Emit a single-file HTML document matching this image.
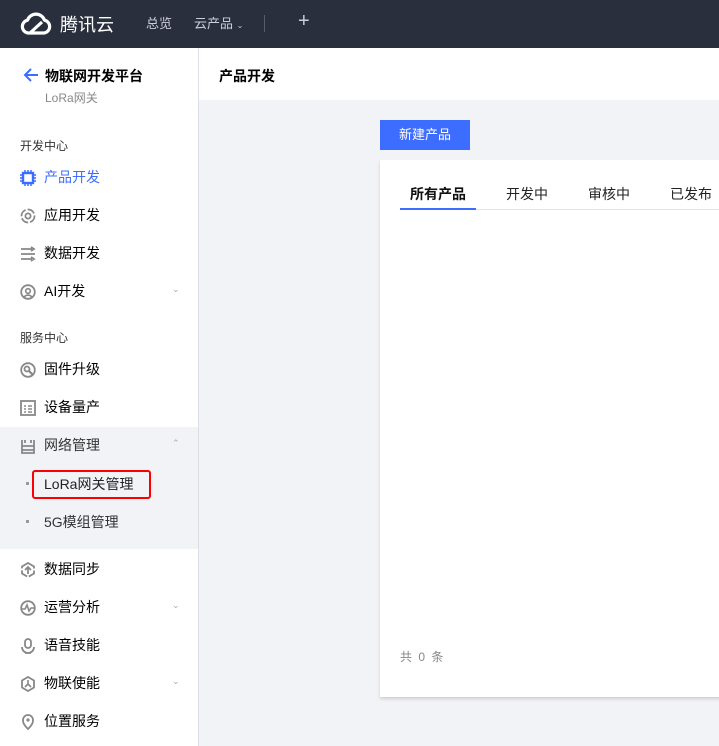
<!DOCTYPE html>
<html><head><meta charset="utf-8"><style>
*{margin:0;padding:0;box-sizing:border-box}
body{width:719px;height:746px;overflow:hidden;background:#f2f3f7;font-family:"Liberation Sans","Noto Sans CJK SC",sans-serif;position:relative;color:#000}
.top{position:absolute;left:0;top:0;width:719px;height:48px;background:#292f3d;color:#fff}
.side{position:absolute;left:0;top:48px;width:199px;height:698px;background:#fff;border-right:1px solid #dcdfe6}
.hdr{position:absolute;left:199px;top:48px;width:520px;height:52px;background:#fff}
.abs{position:absolute;white-space:nowrap}
.grp{font-size:12px;color:#333}
.it{font-size:14px;color:#000;left:44px}
.ic{position:absolute;left:20px;width:16px;height:16px}
.chev{position:absolute;left:172px;font-size:9px;color:#aaa}
</style></head><body>
<div class="top">
<svg class="abs" style="left:19px;top:12px" width="34" height="24" viewBox="0 0 34 24"><path d="M9 21 A6.5 6.5 0 0 1 8.5 8.2 A9 9 0 0 1 25.5 8.2 A6.5 6.5 0 0 1 25 21 Z M11 21 L23 10" fill="none" stroke="#fff" stroke-width="3.2" stroke-linejoin="round"/></svg>
<div class="abs" style="left:60px;top:11px;font-size:18px">腾讯云</div>
<div class="abs" style="left:146px;top:13px;font-size:13px;color:#ccd">总览</div>
<div class="abs" style="left:194px;top:13px;font-size:13px;color:#ccd">云产品 <span style="font-size:8px">⌄</span></div>
<div class="abs" style="left:264px;top:15px;width:1px;height:17px;background:#555c6b"></div>
<div class="abs" style="left:298px;top:10px;font-size:20px;color:#ccd">+</div>
</div>
<div class="hdr"><div class="abs" style="left:20px;top:18px;font-size:14px;font-weight:bold">产品开发</div></div>
<div class="side">
<svg class="abs" style="left:23px;top:20px" width="16" height="14" viewBox="0 0 16 14"><path d="M8 1 L2 7 L8 13 M2 7 H15" fill="none" stroke="#3d6dfe" stroke-width="2"/></svg>
<div class="abs" style="left:45px;top:18px;font-size:14px;font-weight:bold">物联网开发平台</div>
<div class="abs" style="left:45px;top:41px;font-size:12px;color:#888">LoRa网关</div>
<div class="abs grp" style="left:20px;top:89px">开发中心</div>
<svg class="ic" style="top:122px" viewBox="0 0 16 16"><rect x="3" y="3" width="10" height="10" fill="none" stroke="#3d6dfe" stroke-width="2.4"/><path d="M5 0v3M8 0v3M11 0v3M5 13v3M8 13v3M11 13v3M0 5h3M0 8h3M0 11h3M13 5h3M13 8h3M13 11h3" stroke="#3d6dfe" stroke-width="1.5"/></svg>
<div class="abs it" style="top:119px;color:#3d6dfe">产品开发</div>
<svg class="ic" style="top:160px" viewBox="0 0 16 16"><circle cx="8" cy="8" r="6.5" fill="none" stroke="#888" stroke-width="1.8" stroke-dasharray="8 2"/><circle cx="8" cy="8" r="2.6" fill="none" stroke="#888" stroke-width="1.8"/></svg>
<div class="abs it" style="top:157px">应用开发</div>
<svg class="ic" style="top:198px" viewBox="0 0 16 16"><path d="M1 3h11M1 8h14M1 13h11M11 5l3-2-3-2M11 15l3-2-3-2" fill="none" stroke="#888" stroke-width="1.8"/></svg>
<div class="abs it" style="top:195px">数据开发</div>
<svg class="ic" style="top:236px" viewBox="0 0 16 16"><circle cx="8" cy="8" r="6.8" fill="none" stroke="#888" stroke-width="1.8"/><circle cx="8" cy="7" r="2.3" fill="none" stroke="#888" stroke-width="1.6"/><path d="M4 13 Q8 9 12 13" fill="none" stroke="#888" stroke-width="1.6"/></svg>
<div class="abs it" style="top:233px">AI开发</div><div class="chev" style="top:236px">⌄</div>
<div class="abs grp" style="left:20px;top:281px">服务中心</div>
<svg class="ic" style="top:314px" viewBox="0 0 16 16"><circle cx="8" cy="8" r="6.8" fill="none" stroke="#888" stroke-width="1.8"/><circle cx="7" cy="7" r="2.5" fill="none" stroke="#888" stroke-width="1.8"/><path d="M9 9l4 4" stroke="#888" stroke-width="2.2"/></svg>
<div class="abs it" style="top:311px">固件升级</div>
<svg class="ic" style="top:352px" viewBox="0 0 16 16"><rect x="1" y="1" width="14" height="14" fill="none" stroke="#888" stroke-width="1.8"/><path d="M4 6h2M8 6h4M4 9h2M8 9h4M4 12h2M8 12h4" stroke="#888" stroke-width="1.5"/></svg>
<div class="abs it" style="top:349px">设备量产</div>
<div class="abs" style="left:0;top:379px;width:198px;height:122px;background:#f2f3f7"></div>
<svg class="ic" style="top:390px" viewBox="0 0 16 16"><path d="M2 2v13h12V2M2 8h12M2 12h12M5 2v3M11 2v3" fill="none" stroke="#888" stroke-width="1.8"/></svg>
<div class="abs it" style="top:387px;color:#333">网络管理</div><div class="chev" style="top:390px">⌃</div>
<div class="abs" style="left:26px;top:434px;width:3px;height:3px;background:#999"></div>
<div class="abs" style="left:32px;top:422px;width:119px;height:29px;border:2px solid #f00;border-radius:3px"></div>
<div class="abs it" style="top:426px;color:#222">LoRa网关管理</div>
<div class="abs" style="left:26px;top:472px;width:3px;height:3px;background:#999"></div>
<div class="abs it" style="top:464px;color:#333">5G模组管理</div>
<svg class="ic" style="top:514px" viewBox="0 0 16 16"><path d="M8 1l6 3.5v7L8 15 2 11.5v-7z" fill="none" stroke="#888" stroke-width="1.8" stroke-dasharray="9 2"/><path d="M8 12V6M5 8l3-3 3 3" fill="none" stroke="#888" stroke-width="1.8"/></svg>
<div class="abs it" style="top:511px">数据同步</div>
<svg class="ic" style="top:552px" viewBox="0 0 16 16"><circle cx="8" cy="8" r="6.8" fill="none" stroke="#888" stroke-width="1.8"/><path d="M2 9h3l2-4 2 6 2-3h3" fill="none" stroke="#888" stroke-width="1.6"/></svg>
<div class="abs it" style="top:549px">运营分析</div><div class="chev" style="top:552px">⌄</div>
<svg class="ic" style="top:590px" viewBox="0 0 16 16"><rect x="5" y="1" width="6" height="9" rx="3" fill="none" stroke="#888" stroke-width="1.8"/><path d="M2 9a6 6 0 0 0 12 0M5 15h6" fill="none" stroke="#888" stroke-width="1.8"/></svg>
<div class="abs it" style="top:587px">语音技能</div>
<svg class="ic" style="top:628px" viewBox="0 0 16 16"><path d="M8 1l6 3.5v7L8 15 2 11.5v-7z" fill="none" stroke="#888" stroke-width="1.8"/><path d="M8 4v4l-3 3M8 8l3 3" fill="none" stroke="#888" stroke-width="1.6"/></svg>
<div class="abs it" style="top:625px">物联使能</div><div class="chev" style="top:628px">⌄</div>
<svg class="ic" style="top:666px" viewBox="0 0 16 16"><path d="M8 15C3 10 3 8 3 6a5 5 0 0 1 10 0c0 2 0 4-5 9z" fill="none" stroke="#888" stroke-width="1.8"/><circle cx="8" cy="6" r="1.6" fill="#888"/></svg>
<div class="abs it" style="top:663px">位置服务</div>
</div>
<div class="abs" style="left:380px;top:120px;width:90px;height:30px;background:#3d6dfe;color:#fff;font-size:13px;text-align:center;line-height:30px">新建产品</div>
<div class="abs" style="left:380px;top:160px;width:345px;height:537px;background:#fff;box-shadow:0 2px 3px rgba(0,0,0,.15)">
<div class="abs" style="left:20px;top:49px;width:330px;height:1px;background:#e5e5e5"></div>
<div class="abs" style="left:20px;top:48px;width:76px;height:2px;background:#3d6dfe"></div>
<div class="abs" style="left:30px;top:24px;font-size:14px;font-weight:bold;color:#111">所有产品</div>
<div class="abs" style="left:126px;top:24px;font-size:14px;color:#222">开发中</div>
<div class="abs" style="left:208px;top:24px;font-size:14px;color:#222">审核中</div>
<div class="abs" style="left:290px;top:24px;font-size:14px;color:#222">已发布</div>
<div class="abs" style="left:20px;top:488px;font-size:12px;color:#888;word-spacing:3px">共 0 条</div>
</div>
</body></html>
